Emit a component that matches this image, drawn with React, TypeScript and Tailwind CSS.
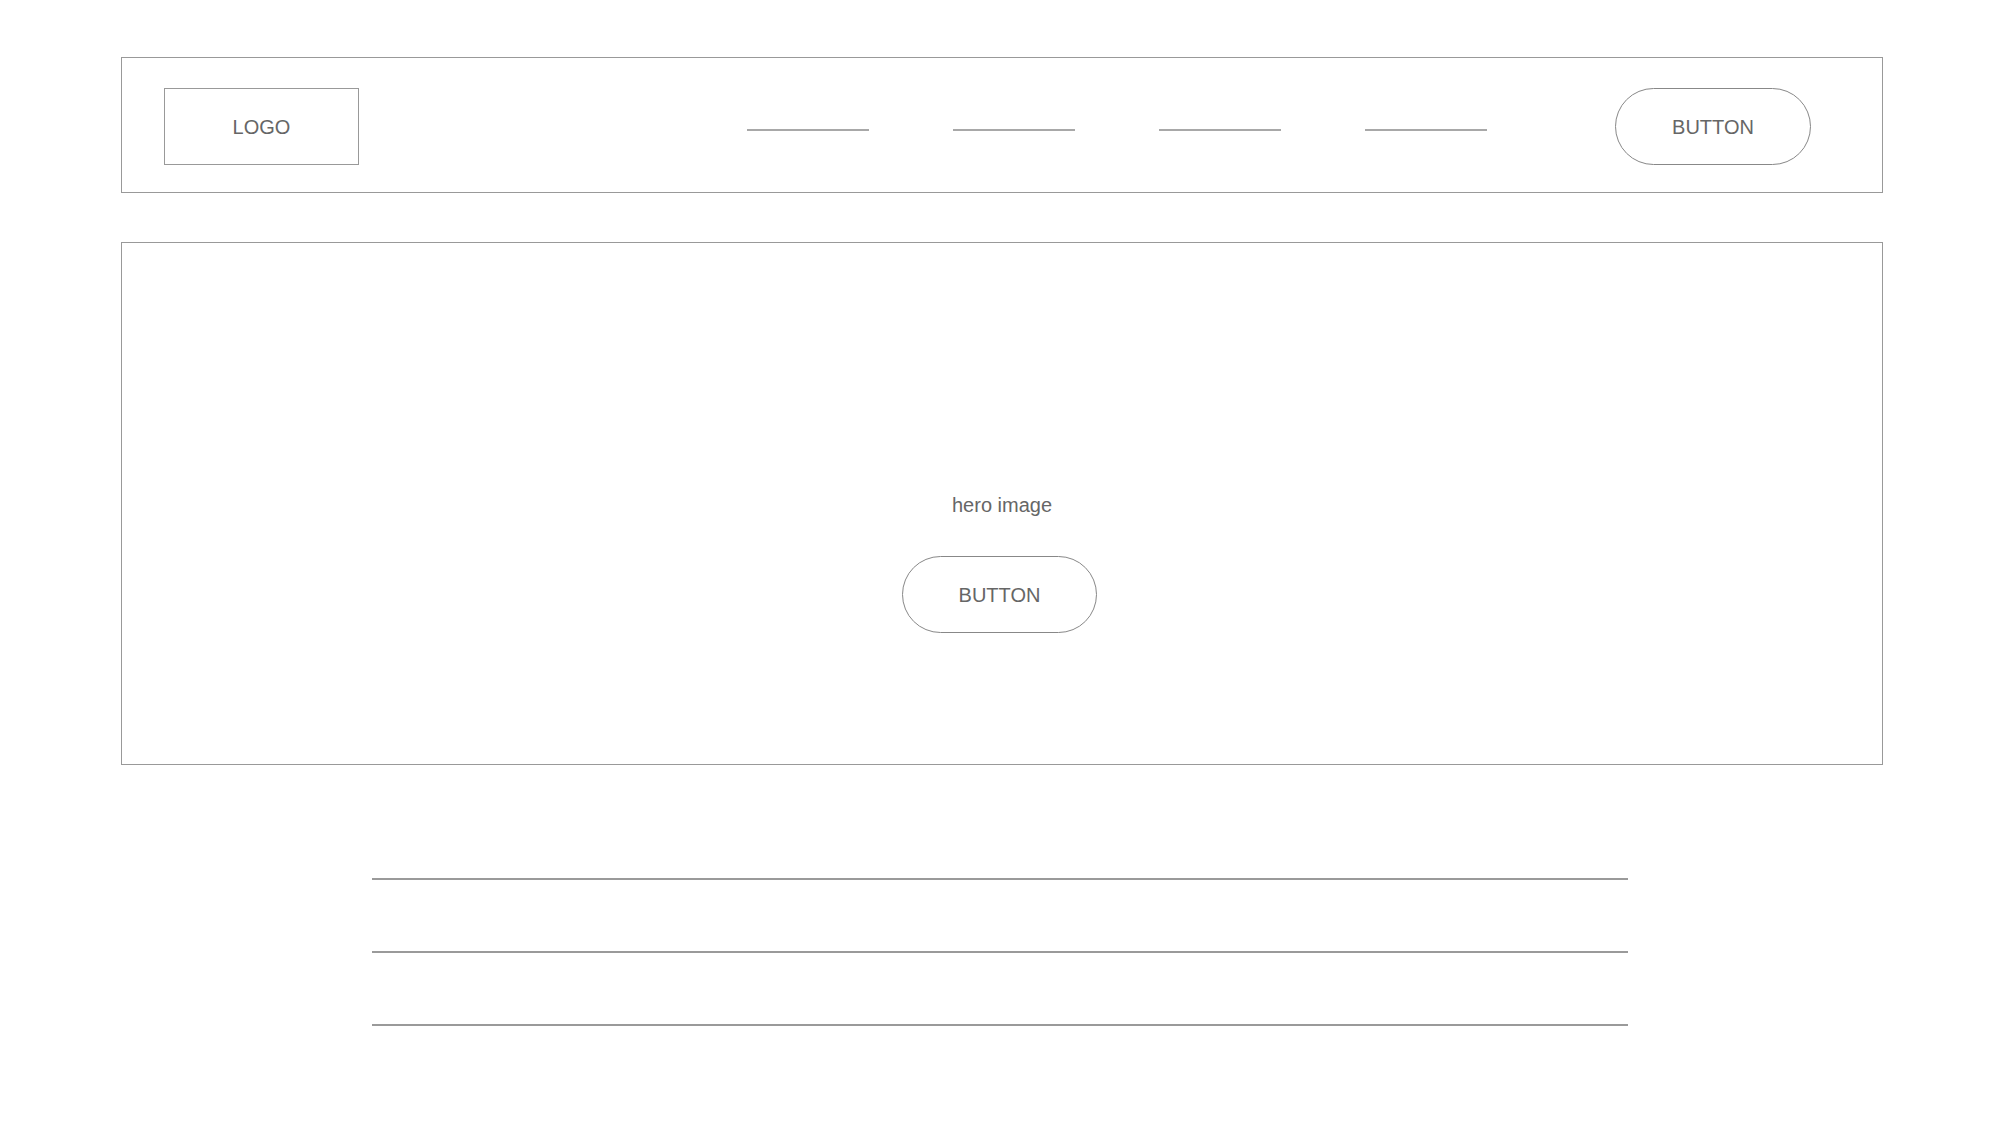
export default function App() {
  const navItems = [0, 1, 2, 3];
  const rules = [0, 1, 2];

  return (
    <div className="min-h-[1121px] w-[2000px] bg-white pt-[57px] text-[#666] font-['Liberation_Sans',Arial,sans-serif]">
      {/* header wireframe */}
      <header className="ml-[121px] flex h-[136px] w-[1762px] items-start border border-[#999] pl-[42px] pr-[71px] pt-[30px]">
        <div className="flex h-[77px] w-[195px] items-center justify-center border border-[#999] text-[20px]">LOGO</div>
        <nav className="ml-[388px] mt-[41px] flex gap-[84px]">
          {navItems.map((i) => (
            <span key={i} className="block h-[2px] w-[122px] bg-[#a8a8a8]" />
          ))}
        </nav>
        <button className="ml-auto flex h-[77px] w-[196px] items-center justify-center rounded-full border border-[#888] text-[20px]">
          BUTTON
        </button>
      </header>

      {/* hero */}
      <section className="ml-[121px] mt-[49px] flex h-[523px] w-[1762px] flex-col items-center border border-[#999] pt-[250px]">
        <p className="text-[20px] leading-[24px]">hero image</p>
        <button className="mr-[5px] mt-[39px] flex h-[77px] w-[195px] items-center justify-center rounded-full border border-[#888] text-[20px]">
          BUTTON
        </button>
      </section>

      {/* text placeholder rules */}
      <div className="ml-[372px] mt-[113px] flex w-[1256px] flex-col gap-[71px]">
        {rules.map((i) => (
          <span key={i} className="block h-[2px] w-full bg-[#9a9a9a]" />
        ))}
      </div>
    </div>
  );
}
